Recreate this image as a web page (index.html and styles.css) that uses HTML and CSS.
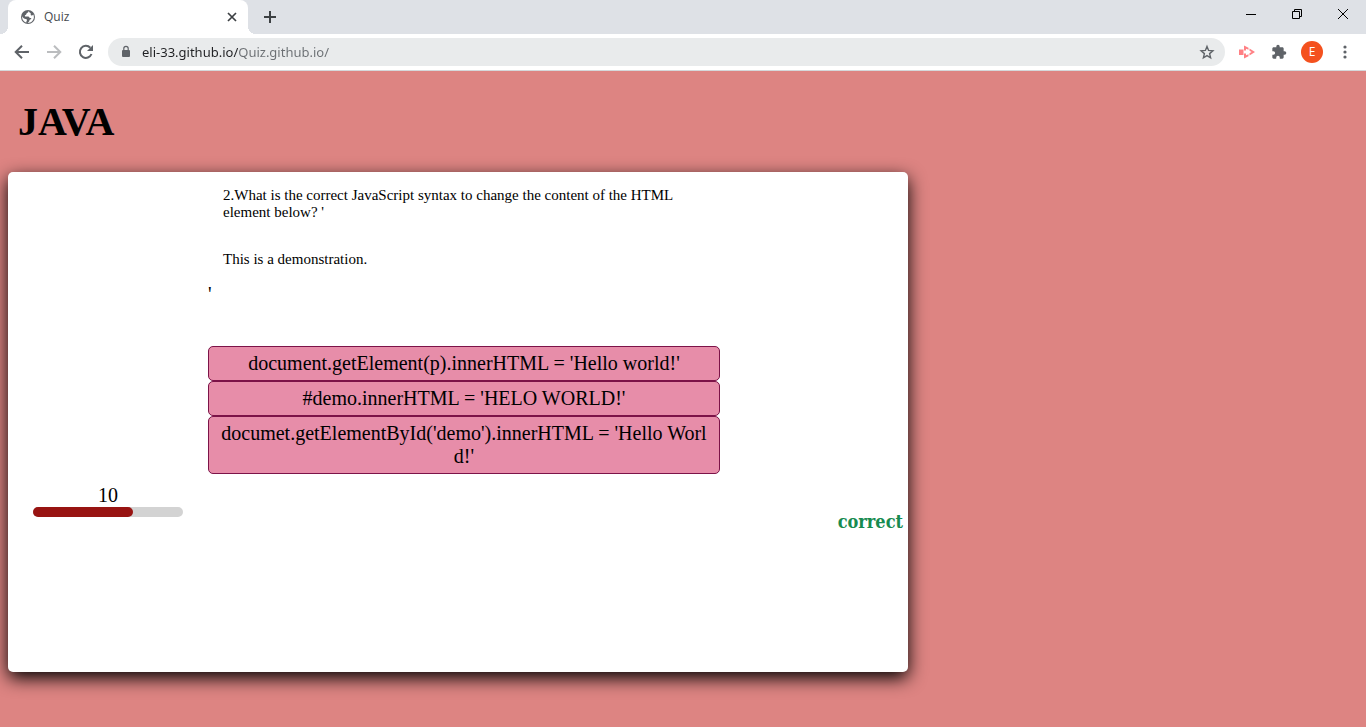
FILE: index.html
```html
<!DOCTYPE html>
<html lang="en">
<head>
<meta charset="utf-8">
<title>Quiz</title>
<link rel="stylesheet" href="styles.css">
</head>
<body>
<header class="browser">
  <div class="tab-strip">
    <div class="tab">
      <svg class="favicon" width="16" height="16" viewBox="0 0 16 16" aria-hidden="true"><circle cx="8" cy="8" r="7" fill="#5f6368"/><path d="M8.600 2.100c-.1 1.500-1 1.700-1.800 2.100-.8.5-.2 1.600-1.300 1.700-.8.1-.7 1-.4 1.500h3c1.400 0 1 1.700 2.300 1.700h1c-.1 1.500-1.900 1.400-2 2.500-.1 1-.8 1.700-1.700 2.300 3.400.1 6.200-2.500 6.200-5.900 0-.9-.2-1.700-.6-2.400-.7.9-1.700 1-2.300.6-.7-.5.2-1.300-.4-1.900-.6-.5-1.400-.9-2-2.200zM2.200 7.200c-.4 3 1.500 5.600 4.200 6.400.1-1-.2-1.500.5-2.200.6-.7-.3-1.500-1.200-1.500-1.500 0-2.500-1-3.500-2.700z" fill="#fff"/></svg>
      <span class="tab-title">Quiz</span>
      <button class="icon-button tab-close" aria-label="Close tab"><svg width="16" height="16" viewBox="0 0 16 16"><path d="M4 4l8 8M12 4l-8 8" stroke="#3c4043" stroke-width="1.700" fill="none"/></svg></button>
    </div>
    <button class="icon-button new-tab" aria-label="New tab"><svg width="16" height="16" viewBox="0 0 16 16"><path d="M8 2v12M2 8h12" stroke="#3c4043" stroke-width="2" fill="none"/></svg></button>
    <div class="window-controls">
      <button class="icon-button" aria-label="Minimize"><svg width="16" height="16" viewBox="0 0 16 16"><path d="M3 8.500h10" stroke="#000"/></svg></button>
      <button class="icon-button" aria-label="Restore"><svg width="16" height="16" viewBox="0 0 16 16"><path d="M3.500 5.500h7v7h-7zM5.500 5.500v-2h7v7h-2" stroke="#000" fill="none"/></svg></button>
      <button class="icon-button" aria-label="Close window"><svg width="16" height="16" viewBox="0 0 16 16"><path d="M3 3l10 10M13 3L3 13" stroke="#000" fill="none"/></svg></button>
    </div>
  </div>
  <div class="toolbar">
    <button class="icon-button" aria-label="Back"><svg width="16" height="16" viewBox="0 0 16 16"><path d="M15 8H2M8 1.700L1.700 8 8 14.300" stroke="#5f6368" stroke-width="2" fill="none"/></svg></button>
    <button class="icon-button" aria-label="Forward" disabled><svg width="16" height="16" viewBox="0 0 16 16"><path d="M1 8h13M8 1.700L14.300 8 8 14.300" stroke="#bbbdbf" stroke-width="2" fill="none"/></svg></button>
    <button class="icon-button" aria-label="Reload"><svg width="16" height="16" viewBox="0 0 16 16"><path d="M13.500 10a6 6 0 1 1-1.200-6.200" stroke="#5f6368" stroke-width="2" fill="none"/><path d="M15 1v6H9z" fill="#5f6368"/></svg></button>
    <div class="address-bar">
      <svg width="10" height="14" viewBox="0 0 10 14" aria-hidden="true"><rect y="5" width="8" height="7" rx="1" fill="#5f6368"/><path d="M1.800 6V3.500a2.200 2.200 0 0 1 4.400 0V6" stroke="#5f6368" stroke-width="1.200" fill="none"/></svg>
      <input class="address" type="text" aria-label="Address" value="eli-33.github.io/Quiz.github.io/">
      <button class="icon-button" aria-label="Bookmark this page"><svg width="16" height="16" viewBox="0 0 16 16"><path d="M8 2.400l1.600 4 4.300.4-3.300 2.800 1 4.200L8 11.600l-3.600 2.200 1-4.200-3.300-2.800 4.300-.4z" stroke="#5f6368" stroke-width="1.400" fill="none"/></svg></button>
    </div>
    <div class="extensions">
      <button class="icon-button" aria-label="Recorder"><svg width="16" height="16" viewBox="0 0 16 16"><path d="M0 5.500h4.500v5.500H0zM5 1.500l4.500 2.200v2L7 4.700v1.800H5zM5 14.500l4.500-2.200v-2L7 11.300V9.500H5zM10.500 4.500L16 8l-5.500 3.500V9.300L12.600 8l-2.100-1.300z" fill="#ff8084"/></svg></button>
      <button class="icon-button" aria-label="Extensions"><svg width="16" height="16" viewBox="0 0 24 24"><path d="M20.500 11H19V7c0-1.100-.9-2-2-2h-4V3.500a2.500 2.500 0 0 0-5 0V5H4c-1.100 0-2 .9-2 2v3.800h1.500a2.700 2.700 0 0 1 0 5.400H2V20c0 1.100.9 2 2 2h3.800v-1.500a2.700 2.700 0 0 1 5.400 0V22H17c1.100 0 2-.9 2-2v-4h1.500a2.500 2.500 0 0 0 0-5z" fill="#5f6368"/></svg></button>
      <button class="avatar" aria-label="Profile E">E</button>
      <button class="icon-button" aria-label="Menu"><svg width="16" height="16" viewBox="0 0 16 16" fill="#5f6368"><circle cx="8" cy="3" r="1.600"/><circle cx="8" cy="8" r="1.600"/><circle cx="8" cy="13" r="1.600"/></svg></button>
    </div>
  </div>
</header>
<main class="page">
  <h1 class="heading">JAVA</h1>
  <section class="quiz">
    <div class="timer">
      <label for="time">10</label>
      <progress class="time-bar" id="time" value="10" max="15"></progress>
    </div>
    <div class="content">
      <div class="question">
        <p class="prompt">2.What is the correct JavaScript syntax to change the content of the HTML element below? '</p>
        <p class="prompt sample">This is a demonstration.</p>
        <span>'</span>
      </div>
      <div class="choices">
        <button class="choice">document.getElement(p).innerHTML = 'Hello world!'</button>
        <button class="choice">#demo.innerHTML = 'HELO WORLD!'</button>
        <button class="choice">documet.getElementById('demo').innerHTML = 'Hello World!'</button>
      </div>
    </div>
    <output class="result">correct</output>
  </section>
</main>
</body>
</html>
```
FILE: styles.css
```css
* { box-sizing: border-box; }

body {
  display: flex;
  flex-direction: column;
  min-height: 100vh;
  margin: 0;
  background: #dd8482;
  color: #000;
  font: 20px/23px "Liberation Serif", serif;
}

button { padding: 0; border: 0; background: none; font: inherit; color: inherit; }
svg { display: block; }

.browser {
  border-bottom: 1px solid #d5d8db;
  background: #fff;
  font: 12px/16px "Open Sans", sans-serif;
}

.icon-button { flex: none; width: 16px; height: 16px; }

.tab-strip {
  display: flex;
  align-items: flex-start;
  height: 34px;
  padding-left: 8px;
  background: #dee1e6;
}

.tab {
  position: relative;
  display: flex;
  align-items: center;
  gap: 8px;
  width: 240px;
  height: 34px;
  padding: 0 8px 0 12px;
  border-radius: 8px 8px 0 0;
  background: #fff;
  color: #45494d;
}

.tab::before,
.tab::after {
  content: "";
  position: absolute;
  bottom: 0;
  width: 8px;
  height: 8px;
}
.tab::before { right: 100%; background: radial-gradient(circle at 0 0, transparent 8px, #fff 8px); }
.tab::after { left: 100%; background: radial-gradient(circle at 100% 0, transparent 8px, #fff 8px); }

.tab-close { margin-left: auto; }
.new-tab { margin: 9px 0 0 14px; }
.window-controls { display: flex; gap: 30px; margin: 6px 15px 0 auto; }

.toolbar {
  display: flex;
  align-items: center;
  gap: 16px;
  height: 36px;
  padding: 0 14px;
}

.address-bar {
  display: flex;
  flex: 1;
  align-items: center;
  gap: 10px;
  height: 28px;
  margin-left: -2px;
  padding: 0 10px 0 14px;
  border-radius: 14px;
  background: #e9ebec;
}

.address {
  flex: 1;
  min-width: 0;
  padding: 0;
  border: 0;
  background: linear-gradient(90deg, #202124 96px, #6b6f73 96px);
  background-clip: text;
  color: transparent;
  font: 13px/20px "Noto Sans", sans-serif;
}

.extensions { display: flex; align-items: center; gap: 14px; margin-left: -2px; }
.extensions .icon-button:first-child { margin-right: 2px; }

.extensions .icon-button:last-child { margin-right: -1px; }

.avatar {
  width: 22px;
  height: 22px;
  border-radius: 50%;
  background: #f4511e;
  color: #fff;
}

.page { flex: 1; padding: 28px 8px 40px; }

.heading { margin: 0 0 27px 10px; font-size: 40px; line-height: 46px; }

.quiz {
  display: grid;
  grid-template-columns: 150px 512px 1fr;
  column-gap: 25px;
  max-width: 900px;
  min-height: 500px;
  padding: 0 5px 0 25px;
  border-radius: 5px;
  background: #fff;
  box-shadow: 0 6px 18px #000;
}

.timer { display: flex; flex-direction: column; padding-top: 312px; text-align: center; }

.time-bar {
  appearance: none;
  display: block;
  width: 100%;
  height: 10px;
  border: 0;
}
.time-bar::-webkit-progress-bar { border-radius: 5px; background: #d3d3d3; }
.time-bar::-webkit-progress-value { border-radius: 5px; background: #981412; }

.question { height: 174px; padding-top: 15px; }
.prompt { max-width: 482px; margin: 0 15px; font-size: 15px; line-height: 17px; }
.sample { margin: 30px 15px 15px; }

.choices { display: flex; flex-direction: column; }

.choice {
  padding: 5px 10px;
  border: 1px solid #7c1348;
  border-radius: 5px;
  background: #e78da9;
  word-break: break-all;
}

.result {
  padding-top: 338px;
  color: #178b50;
  font-family: "DejaVu Serif Condensed", "DejaVu Serif", serif;
  font-size: 18px;
  font-weight: bold;
  text-align: right;
}
```
